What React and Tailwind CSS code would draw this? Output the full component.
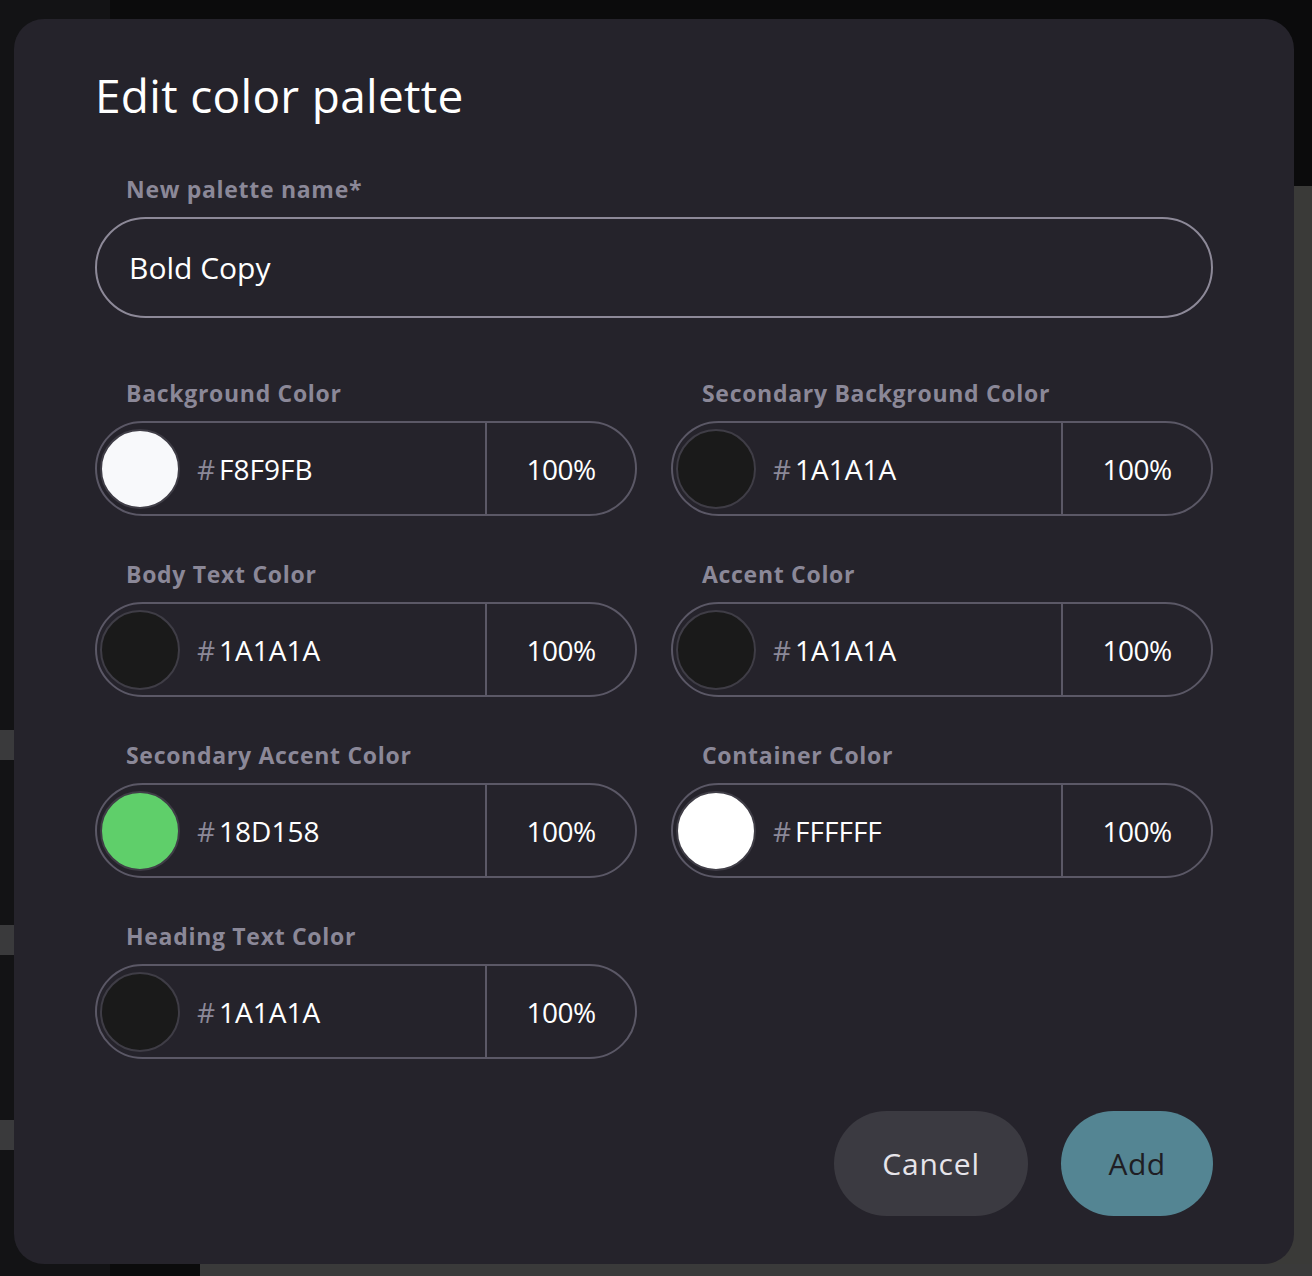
import React from 'react';

const font = { fontFamily: '"Open Sans", "Liberation Sans", sans-serif' };

const fields = [
  { label: 'Background Color', hex: 'F8F9FB', color: '#f8f9fb' },
  { label: 'Secondary Background Color', hex: '1A1A1A', color: '#1a1a1a' },
  { label: 'Body Text Color', hex: '1A1A1A', color: '#1a1a1a' },
  { label: 'Accent Color', hex: '1A1A1A', color: '#1a1a1a' },
  { label: 'Secondary Accent Color', hex: '18D158', color: '#5fcf6a' },
  { label: 'Container Color', hex: 'FFFFFF', color: '#ffffff' },
  { label: 'Heading Text Color', hex: '1A1A1A', color: '#1a1a1a' },
];

function ColorField({ label, hex, color }) {
  return (
    <div className="flex flex-col">
      <label className="pl-[31px] text-[23px] font-bold leading-[28px] tracking-[0.7px] text-[#8b8898] mb-[14px]">
        {label}
      </label>
      <div className="flex h-[95px] items-center rounded-full border-2 border-[#5b5866] text-[28px] leading-none text-white">
        <div className="ml-[3px] h-[80px] w-[80px] shrink-0 rounded-full border-2 border-[#3f3d46]" style={{ backgroundColor: color }} />
        <div className="flex flex-1 items-center pl-[17px]">
          <span className="mr-[4px] text-[#8b8898]">#</span>
          <span>{hex}</span>
        </div>
        <div className="flex h-full w-[150px] items-center justify-center border-l-2 border-[#5b5866] tracking-[-0.5px]">
          100%
        </div>
      </div>
    </div>
  );
}

export default function App() {
  return (
    <div className="relative h-[1276px] w-[1312px] overflow-hidden bg-[#0b0b0c]" style={font}>
      {/* backdrop page */}
      <div className="flex h-full">
        <div className="flex w-[110px] flex-col bg-[#131315]">
          <div className="h-[400px]" />
          <div className="mt-[130px] h-[30px] bg-[#161618]" />
          <div className="mt-[170px] h-[30px] bg-[#3a3a3c]" />
          <div className="mt-[165px] h-[30px] bg-[#3a3a3c]" />
          <div className="mt-[165px] h-[30px] bg-[#3a3a3c]" />
        </div>
        <div className="flex flex-1 flex-col">
          <div className="h-[187px]" />
          <div className="flex flex-1 justify-end">
            <div className="h-[1078px] w-[400px] bg-[#3a3a38]" />
          </div>
          <div className="ml-[90px] h-[12px] bg-[#3a3a3a]" />
        </div>
      </div>

      {/* modal */}
      <div className="absolute left-[14px] top-[19px] flex h-[1245px] w-[1280px] flex-col rounded-[30px] bg-[#25232b] px-[81px] pt-[48px]">
        <h1 className="text-[46px] leading-[56px] tracking-[0.3px] font-normal text-white">Edit color palette</h1>

        <label className="mt-[52px] pl-[31px] text-[23px] font-bold leading-[28px] tracking-[0.7px] text-[#8b8898]">
          New palette name*
        </label>
        <div className="mt-[14px] flex h-[101px] items-center rounded-full border-2 border-[#8d8998] pl-[32px] text-[30px] text-white">
          Bold Copy
        </div>

        <div className="mt-[61px] grid grid-cols-2 gap-x-[34px] gap-y-[44px]">
          {fields.map((f) => (
            <ColorField key={f.label} {...f} />
          ))}
        </div>

        <div className="mt-[52px] flex justify-end gap-[33px]">
          <button className="h-[105px] w-[194px] rounded-full bg-[#3b3a41] text-[30px] tracking-[0.8px] text-[#e6e4ea]">Cancel</button>
          <button className="h-[105px] w-[152px] rounded-full bg-[#548593] text-[30px] tracking-[0.5px] text-[#1f1e24]">Add</button>
        </div>
      </div>
    </div>
  );
}
